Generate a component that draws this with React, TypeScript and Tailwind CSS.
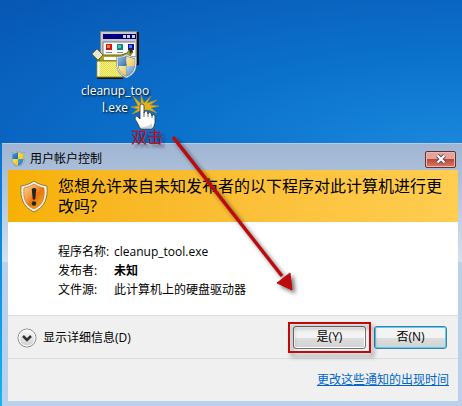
import { useId } from "react";

const details = [
    { label: "程序名称:", value: "cleanup_tool.exe" },
    { label: "发布者:", value: "未知", strong: true },
    { label: "文件源:", value: "此计算机上的硬盘驱动器" },
];

function UacShield({ className, soft }: { className?: string; soft?: boolean }) {
    const id = useId();
    const outline = "M16 1 C12 4 7 5 2 5 V15 C2 25 8 32 16 35 C24 32 30 25 30 15 V5 C25 5 20 4 16 1 Z";

    return (
        <svg viewBox="0 0 32 36" className={className} aria-hidden="true">
            <defs>
                <clipPath id={id}>
                    <path d={outline} />
                </clipPath>
                <linearGradient id={`${id}b`} x1="0" y1="0" x2="1" y2="1">
                    <stop offset="0" stopColor={soft ? "#b9d4ea" : "#4e9fe0"} />
                    <stop offset="1" stopColor={soft ? "#3470ad" : "#1668be"} />
                </linearGradient>
                <linearGradient id={`${id}y`} x1="0" y1="0" x2="1" y2="1">
                    <stop offset="0" stopColor={soft ? "#fff0b8" : "#ffe84a"} />
                    <stop offset="1" stopColor={soft ? "#edc050" : "#f3bd10"} />
                </linearGradient>
            </defs>
            <g clipPath={`url(#${id})`}>
                <path d="M0 0H16V18H0Z" fill={`url(#${id}b)`} />
                <path d="M16 0H32V18H16Z" fill={`url(#${id}y)`} />
                <path d="M0 18H16V36H0Z" fill={`url(#${id}y)`} />
                <path d="M16 18H32V36H16Z" fill={`url(#${id}b)`} />
            </g>
            <path d={outline} fill="none" stroke="#6d8296" strokeWidth="3" />
            <path d={outline} fill="none" stroke="#e2e8ec" strokeWidth="1.6" />
        </svg>
    );
}

function WarningShield() {
    return (
        <svg viewBox="0 0 28 33" className="h-[33px] w-7 shrink-0" aria-hidden="true">
            <defs>
                <linearGradient id="warn-fill" x1="0" y1="0" x2="1" y2="1">
                    <stop offset="0" stopColor="#fdd29a" />
                    <stop offset="0.35" stopColor="#f5a24a" />
                    <stop offset="0.55" stopColor="#e87508" />
                    <stop offset="1" stopColor="#ffb52e" />
                </linearGradient>
            </defs>
            <path d="M14 1 C10 4 6 5 1 6 C0 18 3 27 14 32 C25 27 28 18 27 6 C22 5 18 4 14 1Z" fill="#f4f1e8" stroke="#96793c" />
            <path d="M14 4 C11 6 8 7 4 8 C3 18 5 25 14 29 C23 25 25 18 24 8 C20 7 17 6 14 4Z" fill="url(#warn-fill)" stroke="#c07a28" strokeWidth="0.7" />
            <path d="M11.7 9 Q14 7 16.3 9 L15.2 19.5 H12.8Z" fill="#222" />
            <circle cx="14" cy="23.5" r="2.2" fill="#222" />
        </svg>
    );
}

function ProgramIcon() {
    return (
        <svg viewBox="0 0 48 50" className="h-[50px] w-12" aria-hidden="true">
            <defs>
                <pattern id="dots" width="2" height="2" patternUnits="userSpaceOnUse">
                    <path d="M0 0H2V2H0Z" fill="#e3dd35" />
                    <path d="M0 0H1V1H0ZM1 1H2V2H1Z" fill="#f5f09a" />
                </pattern>
            </defs>
            <path d="M11 2H48V35H11Z" fill="#111" />
            <path d="M9 1H46V34H9Z" fill="#858585" />
            <path d="M10 2H45V33H10Z" fill="#c9c9c9" />
            <path d="M12 4H45V9H12Z" fill="#000080" />
            <path d="M32 5H35V8H32ZM36 5H39V8H36ZM41 5H44V8H41Z" fill="#d0d0d0" />
            <path d="M12 12H44V31H12Z" fill="#fff" />
            <path d="M12 12V31M12 12H44" stroke="#777" />
            <path d="M15 14H21V20H15Z" fill="#c71910" />
            <path d="M16 15H19V18H16Z" fill="#ff7b3c" />
            <path d="M26 14H32V20H26Z" fill="#13857d" />
            <path d="M27 15H30V18H27Z" fill="#45c9b5" />
            <path d="M37 14H43V20H37Z" fill="#0b15a3" />
            <path d="M38 15H41V18H38Z" fill="#4c73f0" />
            <path d="M15 22.5H21M26 22.5H32" stroke="#888" />
            <path d="M10 25H30L36 23L39 19L42 22L38 27L31 31H8Z" fill="#aaa51e" stroke="#6e6a0b" />
            <path d="M38 19L40 18L42 21L39 24Z" fill="#33310a" />
            <path d="M13 27H29V30H13Z" fill="#fff" />
            <path d="M1 24L6 19L12 25L7 30Z" fill="#e5e5d8" stroke="#77731c" />
            <path d="M6 48H32" stroke="#111" strokeWidth="2" />
            <path d="M6 31H32V47H6Z" fill="url(#dots)" stroke="#8b8728" />
            <path d="M7.5 32V46" stroke="#fff" strokeWidth="2" />
            <svg x="25" y="24" width="21" height="24" viewBox="0 0 21 24">
                <UacShield soft />
            </svg>
        </svg>
    );
}

function ClickHand() {
    return (
        <svg viewBox="0 0 30 36" className="h-9 w-[30px]" aria-hidden="true">
            <path
                d="M10 9L2 1L7 11L0 12L7 14L1 19L11 15L18 15L26 18L20 13L28 11L19 10L26 5L16 8L20 1L13 8L10 0Z"
                fill="#e0b51c"
                stroke="#ad8b28"
                strokeWidth="0.7"
            />
            <path
                d="M9 24V11Q9 9 11 9Q13 9 13 11V18Q14 15 16 16L17 19Q18 16 20 18L21 21Q23 18 24 21V28Q23 32 21 34H10Q8 32 7 29L4 24Q4 21 6 21Z"
                fill="#fff"
                stroke="#333"
                strokeWidth="0.8"
            />
            <path d="M13 17V22M17 18V22M21 20V23" stroke="#444" strokeWidth="0.8" />
            <path d="M10 32Q18 32 21 28V33H11Z" fill="#d1d1d1" />
        </svg>
    );
}

function PointerArrow() {
    return (
        <svg viewBox="0 0 130 165" className="pointer-events-none absolute left-[170px] top-[134px] h-[165px] w-[130px] drop-shadow-[3px_3px_2px_#0008]" aria-hidden="true">
            <path d="M3 3L112 142" stroke="#bd0b0d" strokeWidth="3.5" />
            <path d="M122 156L107 149L120 139Z" fill="#bd0b0d" stroke="#bd0b0d" />
        </svg>
    );
}

const buttonClass =
    "h-[23px] w-[73px] rounded-[3px] border bg-linear-to-b from-[#f3f3f3] from-50% via-[#dedede] via-50% to-[#d2d2d2] text-center leading-5";

export default function App() {
    return (
        <main className="relative flex min-h-screen flex-col overflow-hidden bg-linear-to-b from-[#0757b4] via-[#0a70d2] via-35% to-[#16b4f2] font-['Open_Sans','Noto_Sans_CJK_SC',sans-serif] text-xs text-black">
            <section className="h-[143px] bg-[radial-gradient(ellipse_at_100%_110%,#1b8ade_0%,#0b72cc_45%,#0756b4_100%)]" aria-label="桌面">
                <div className="absolute left-[75px] top-[30px] flex w-20 flex-col items-center">
                    <ProgramIcon />
                    <span className="mt-0.5 w-[72px] break-all text-center leading-[17px] text-white [text-shadow:1px_1px_2px_#000]">
                        cleanup_tool.exe
                    </span>
                </div>
                <div className="absolute left-[131px] top-[95px] z-10 flex flex-col">
                    <ClickHand />
                    <span className="-mt-1 text-base leading-5 text-[#c80b1b] [text-shadow:3px_3px_3px_#0006]">双击</span>
                </div>
            </section>

            <section
                role="dialog"
                aria-labelledby="uac-title"
                className="ml-0.5 flex flex-1 flex-col border-t border-[#b9cbe0] bg-linear-to-b from-[#9fb5d2] via-[#d3e0f0] via-45% to-[#b9d1ea] to-45% pb-[5px] pl-1.5 pr-1"
            >
                <header className="flex h-[26px] items-center gap-1 pl-0.5 pr-0.5 pt-1">
                    <UacShield className="h-4 w-4" />
                    <h1 id="uac-title" className="flex-1">用户帐户控制</h1>
                    <button
                        type="button"
                        aria-label="关闭"
                        className="flex h-[17px] w-[31px] items-center justify-center rounded-[2px] border border-[#64303a] bg-linear-to-b from-[#e3a399] from-45% via-[#bd4736] via-50% to-[#d77b68] shadow-[inset_0_0_0_1px_#eab8ad]"
                    >
                        <svg viewBox="0 0 12 10" className="h-2.5 w-3" aria-hidden="true">
                            <path d="M2.5 1.5L9.5 8.5M9.5 1.5L2.5 8.5" stroke="#554b57" strokeWidth="4" />
                            <path d="M2.5 1.5L9.5 8.5M9.5 1.5L2.5 8.5" stroke="#fff" strokeWidth="2.2" />
                        </svg>
                    </button>
                </header>

                <div className="flex h-[52px] items-center gap-[10px] bg-linear-to-r from-[#f6b100] to-[#ffcd50] pl-3 pr-3">
                    <WarningShield />
                    <h2 className="flex-1 text-base leading-5">您想允许来自未知发布者的以下程序对此计算机进行更改吗?</h2>
                </div>

                <dl className="h-[93px] bg-white pl-[50px] pt-5 leading-[19px]">
                    {details.map(item => (
                        <div key={item.label} className="flex">
                            <dt className="w-14">{item.label}</dt>
                            <dd className={item.strong ? "font-bold" : ""}>{item.value}</dd>
                        </div>
                    ))}
                </dl>

                <div className="flex h-11 items-center justify-between border-y border-[#dcdcdc] bg-[#f0f0f0] pl-[9px] pr-[11px]">
                    <button type="button" className="flex items-center gap-1.5 pt-px">
                        <svg viewBox="0 0 20 20" className="h-5 w-5" aria-hidden="true">
                            <defs>
                                <linearGradient id="chev-fill" x1="0" y1="0" x2="0" y2="1">
                                    <stop offset="0" stopColor="#fff" />
                                    <stop offset="1" stopColor="#ccc" />
                                </linearGradient>
                            </defs>
                            <circle cx="10" cy="10" r="9" fill="url(#chev-fill)" stroke="#858585" />
                            <circle cx="10" cy="10" r="8" fill="none" stroke="#fff" />
                            <path d="M6 8L10 12L14 8" fill="none" stroke="#333" strokeWidth="2.5" />
                        </svg>
                        显示详细信息(D)
                    </button>
                    <div className="flex gap-2">
                        <div className="relative">
                            <button type="button" className={`${buttonClass} border-[#707070] shadow-[inset_0_0_0_1px_#fff]`}>是(Y)</button>
                            <span className="pointer-events-none absolute -inset-x-[5px] -inset-y-1 border-2 border-[#bd0b0d] drop-shadow-[3px_4px_2px_#0006]" />
                        </div>
                        <button type="button" className={`${buttonClass} border-[#3c7fb1] shadow-[inset_0_0_0_1px_#54cff5]`}>否(N)</button>
                    </div>
                </div>

                <footer className="flex flex-1 items-center justify-end bg-[#f0f0f0] pr-[9px]">
                    <a href="#notifications" className="text-[#0066cc] underline">更改这些通知的出现时间</a>
                </footer>
            </section>

            <PointerArrow />
        </main>
    );
}
